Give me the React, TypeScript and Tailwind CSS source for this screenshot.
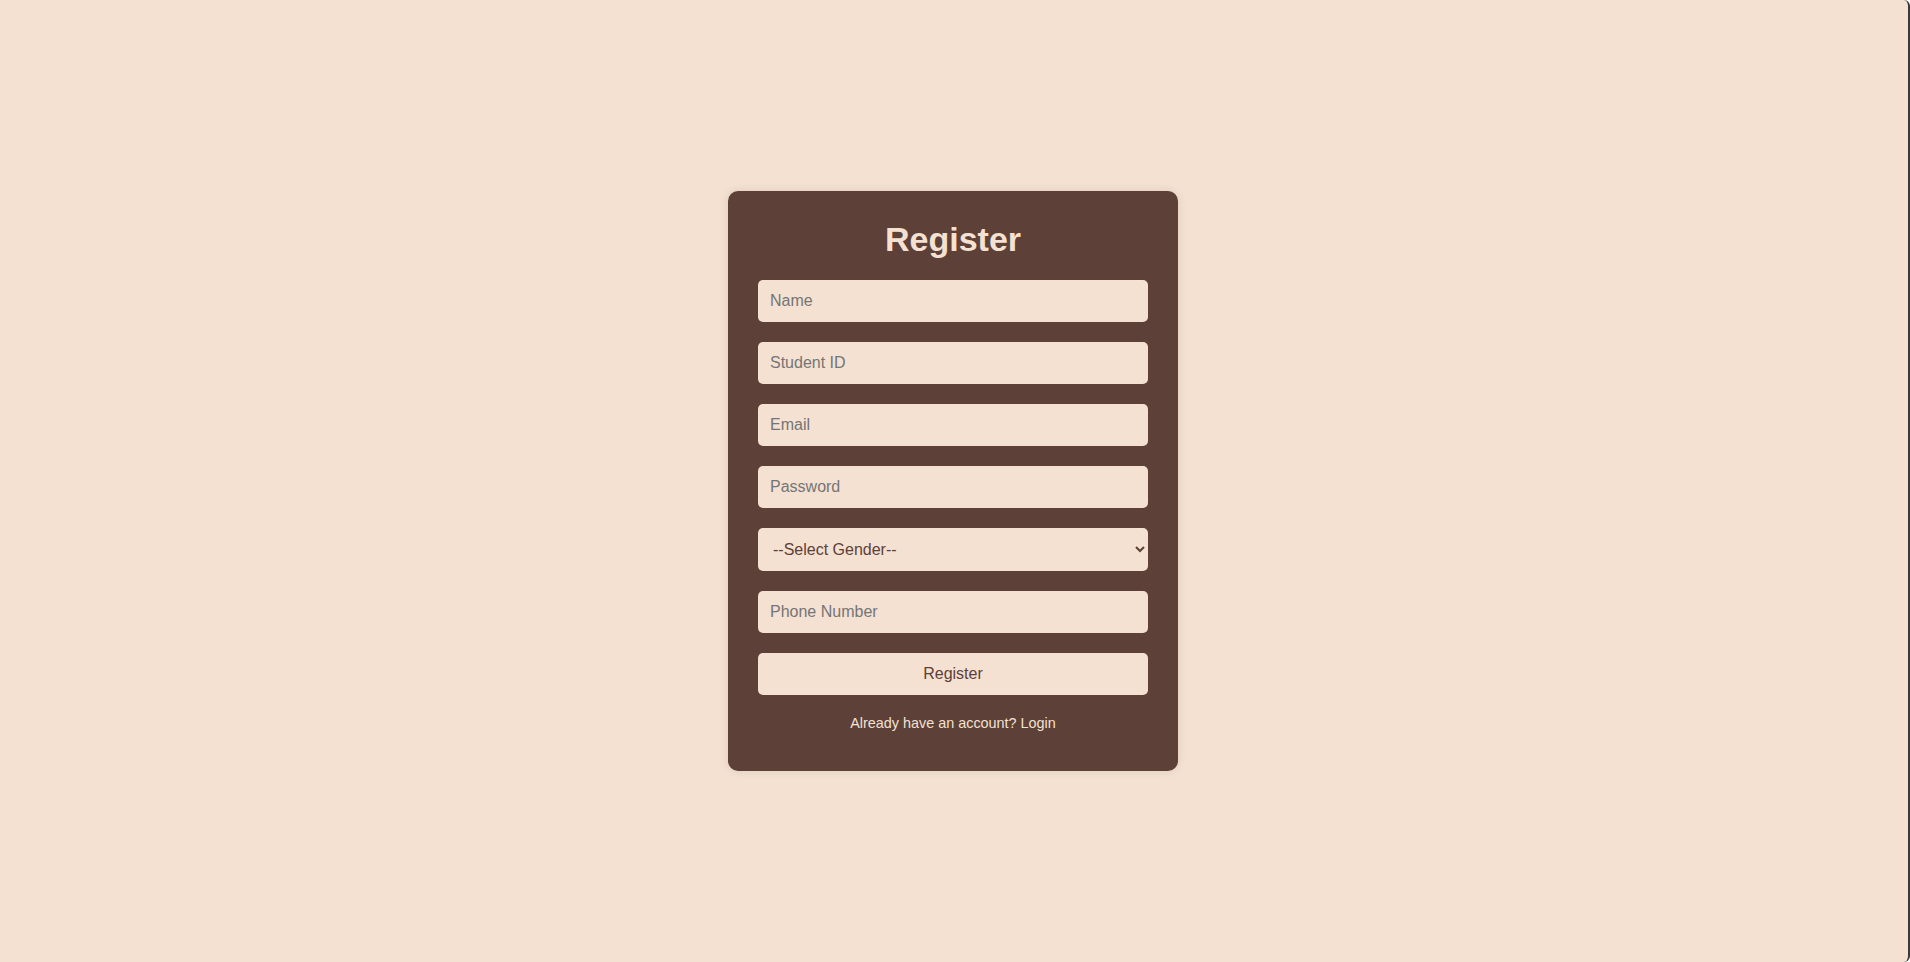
const fields = ["Name", "Student ID", "Email", "Password"];

const inputCls =
  "h-[42px] w-full rounded-[5px] bg-[#f4e1d2] px-3 text-[16px] text-[#5d4037] outline-none placeholder:text-[#757575]";

const App = () => {
  return (
    <div
      className="flex min-h-screen w-full items-center justify-center rounded-r-[6px] border-r-2 border-[#3a3a3a] bg-[#f4e1d2] pr-[2px]"
      style={{ fontFamily: '"Liberation Sans", Arial, sans-serif' }}
    >
      <div className="flex w-[450px] flex-col rounded-[10px] bg-[#5d4037] px-[30px] pt-[29px] pb-[39px] shadow-[0_0_10px_rgba(0,0,0,0.1)]">
        <h2 className="mb-[21px] text-center text-[34px] font-bold leading-[1.15] text-[#f4e1d2]">
          Register
        </h2>

        <form className="flex flex-col gap-5" onSubmit={(e) => e.preventDefault()}>
          {fields.map((f) => (
            <input
              key={f}
              type={f === "Password" ? "password" : f === "Email" ? "email" : "text"}
              placeholder={f}
              className={inputCls}
            />
          ))}
          <select
            defaultValue=""
            className="h-[43px] w-full rounded-[5px] bg-[#f4e1d2] pl-[11px] pr-2 text-[16px] text-[#5d4037] outline-none"
          >
            <option value="" disabled>
              --Select Gender--
            </option>
            <option value="male">Male</option>
            <option value="female">Female</option>
          </select>
          <input type="tel" placeholder="Phone Number" className={inputCls} />
          <button
            type="submit"
            className="h-[42px] w-full rounded-[5px] bg-[#f4e1d2] text-[16px] text-[#5d4037]"
          >
            Register
          </button>
        </form>

        <p className="mt-5 text-center text-[14.4px] leading-[1.15] text-[#f4e1d2]">
          Already have an account? <a href="#">Login</a>
        </p>
      </div>
    </div>
  );
};

export default App;
